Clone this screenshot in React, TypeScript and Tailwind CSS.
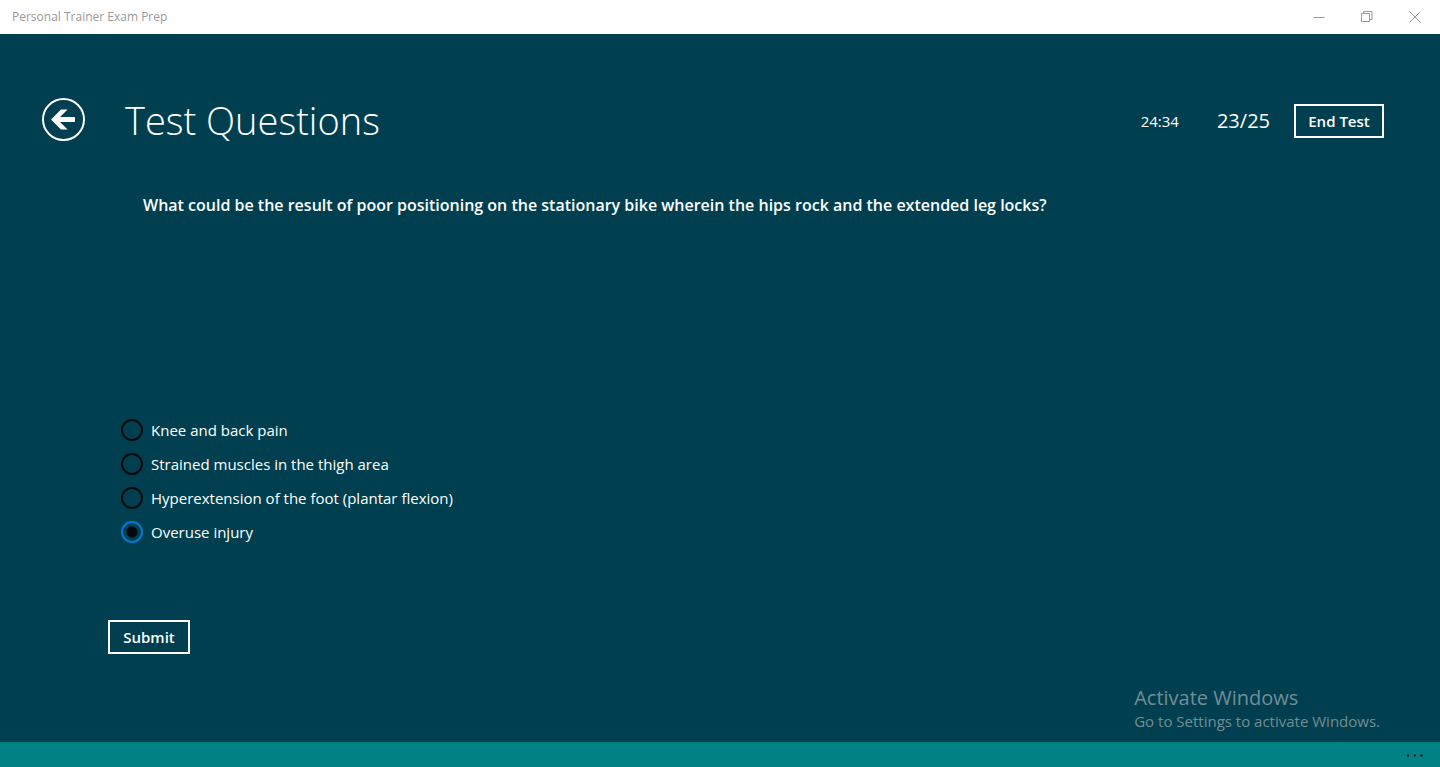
import { useState } from 'react'

const ANSWERS = [
  'Knee and back pain',
  'Strained muscles in the thigh area',
  'Hyperextension of the foot (plantar flexion)',
  'Overuse injury',
]

function TitleBar() {
  return (
    <header className="flex h-[34px] flex-shrink-0 items-center justify-between bg-white pl-3 text-[#999999]">
      <span className="text-[12px] leading-4">Personal Trainer Exam Prep</span>
      <div className="flex pr-px">
        <button type="button" aria-label="Minimize" className="flex h-[34px] w-12 items-center justify-center">
          <svg width="12" height="12" viewBox="0 0 12 12" fill="none" stroke="currentColor">
            <path d="M0.500 6.500h11" />
          </svg>
        </button>
        <button type="button" aria-label="Restore" className="flex h-[34px] w-12 items-center justify-center">
          <svg width="12" height="12" viewBox="0 0 12 12" fill="none" stroke="currentColor">
            <path d="M0.500 2.500h8v8h-8zM2.500 2.500v-2h8.500v8h-2.500" />
          </svg>
        </button>
        <button type="button" aria-label="Close" className="flex h-[34px] w-12 items-center justify-center">
          <svg width="12" height="12" viewBox="0 0 12 12" fill="none" stroke="currentColor">
            <path d="M0.500 0.500l11 11M11.500 0.500l-11 11" />
          </svg>
        </button>
      </div>
    </header>
  )
}

function BackButton() {
  return (
    <button type="button" aria-label="Back" className="h-11 w-11 flex-shrink-0">
      <svg width="44" height="44" viewBox="0 0 44 44">
        <circle cx="22.500" cy="21.500" r="20.500" fill="none" stroke="white" strokeWidth="2" />
        <path d="M10 21.500l10-10h6.600l-7.600 7.500h15v5h-15l7.600 7.500H20z" fill="white" />
      </svg>
    </button>
  )
}

export default function App() {
  const [selected, setSelected] = useState(3)

  return (
    <div className="flex min-h-screen flex-col bg-[#003f4f] font-['Open_Sans','Noto_Sans',sans-serif] text-white">
      <TitleBar />

      <main className="flex flex-1 flex-col">
        {/* Page header */}
        <div className="flex items-center pt-[59px] pr-14 pl-[41px]">
          <BackButton />
          <h1 className="ml-10 text-[38px] leading-[54px] font-light">Test Questions</h1>
          <div className="ml-auto flex items-center pt-0.5">
            <span className="text-[15px] leading-5">24:34</span>
            <span className="ml-[38px] text-[20px] leading-6">23/25</span>
            <button
              type="button"
              className="ml-6 h-[34px] w-[90px] border-2 border-white text-[15px] leading-5 font-semibold"
            >
              End Test
            </button>
          </div>
        </div>

        <form className="flex flex-1 flex-col" onSubmit={e => e.preventDefault()}>
          <fieldset>
            <legend className="h-[260px] pt-[46px] pr-14 pl-[143px] text-[16px] leading-6 font-semibold">
              What could be the result of poor positioning on the stationary bike wherein the hips rock and the extended leg locks?
            </legend>
            <div className="flex flex-col gap-3 pt-3 pl-[121px]">
              {ANSWERS.map((answer, i) => (
                <label key={answer} className="flex h-[22px] items-center gap-2 text-[15px] leading-[22px]">
                  <input
                    type="radio"
                    name="answer"
                    checked={selected === i}
                    onChange={() => setSelected(i)}
                    className="h-[22px] w-[22px] appearance-none rounded-full border-2 border-[#05090c] checked:border-[#0078d7] checked:bg-[radial-gradient(circle,#05090c_5px,transparent_6px)]"
                  />
                  {answer}
                </label>
              ))}
            </div>
          </fieldset>

          <div className="flex flex-1 items-start justify-between pr-[60px] pl-[108px]">
            <button
              type="submit"
              className="mt-[77px] h-[34px] w-[82px] border-2 border-white text-[15px] leading-5 font-semibold"
            >
              Submit
            </button>
            <div className="mb-2.5 self-end text-[#738d94]">
              <p className="text-[20px] leading-6">Activate Windows</p>
              <p className="text-[15px] leading-[22px]">Go to Settings to activate Windows.</p>
            </div>
          </div>
        </form>
      </main>

      <footer className="flex h-[25px] flex-shrink-0 items-end justify-end bg-[#008285] pr-3">
        <button type="button" aria-label="More" className="px-1 pt-1 pb-2.5">
          <svg width="18" height="3" viewBox="0 0 18 3" fill="#05090c">
            <path d="M1 0.500h2v2h-2zM8 0.500h2v2h-2zM14.500 0.500h2v2h-2z" />
          </svg>
        </button>
      </footer>
    </div>
  )
}
